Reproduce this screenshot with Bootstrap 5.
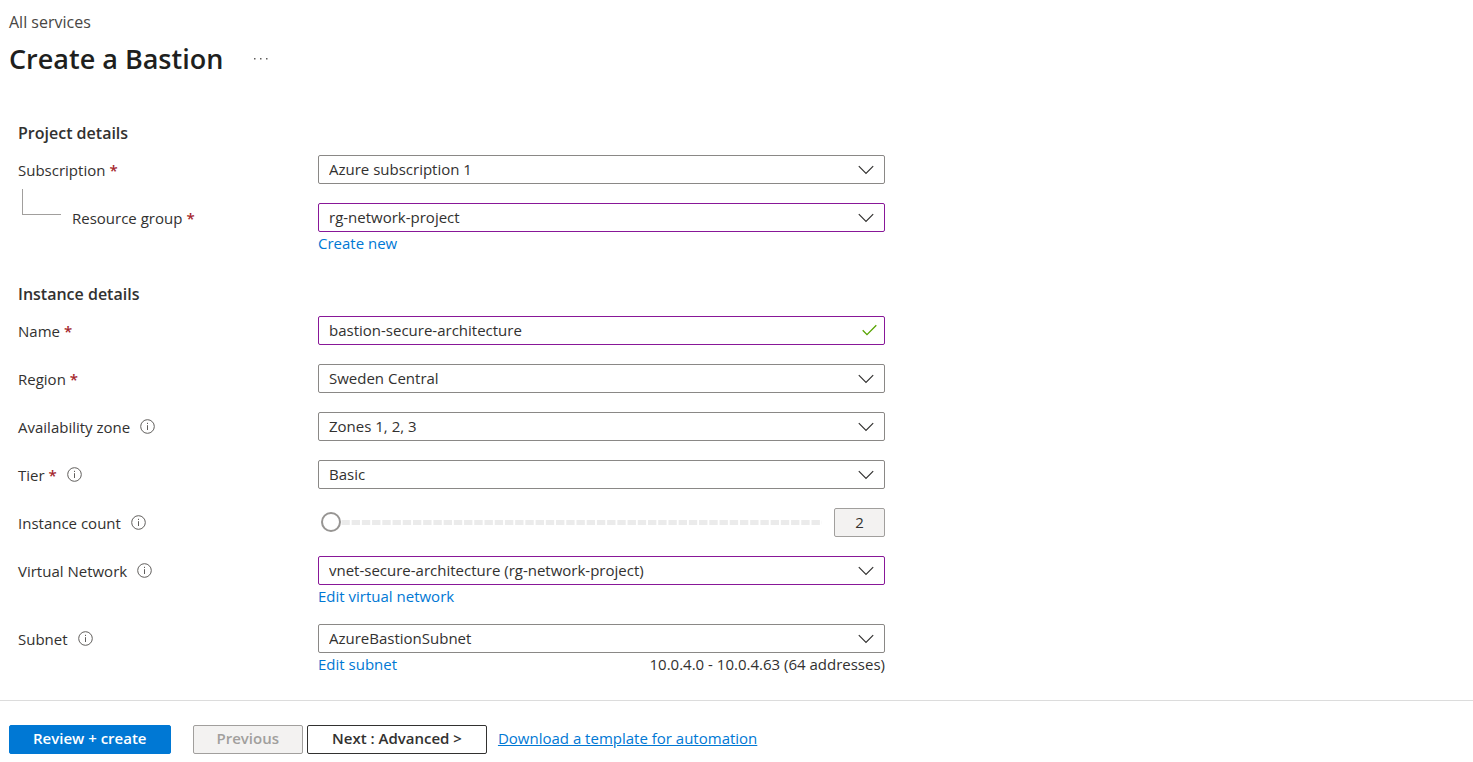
<!DOCTYPE html>
<html lang="en">
<head>
  <meta charset="UTF-8" />
  <title>Create a Bastion</title>
  <meta name="viewport" content="width=device-width, initial-scale=1" />
  <link href="https://cdn.jsdelivr.net/npm/bootstrap@5.3.0/dist/css/bootstrap.min.css" rel="stylesheet" />
  <style>
    body {
      font-family: "Open Sans", "Noto Sans", sans-serif;
      font-size: 15px;
      line-height: 20px;
      color: #323130;
    }
    a { color: #0078d4; }
    .crumb { color: #484644; font-size: 16px; }
    .page-title {
      font-size: 27px;
      line-height: 38px;
      font-weight: 600;
      color: #201f1e;
    }
    .page-head { padding: 12px 9px 0; }
    .more-btn { width: 20px; height: 20px; margin-left: 28px; }
    .blade-form { padding: 45px 18px 20px; }
    .section-title {
      font-size: 16px;
      line-height: 20px;
      font-weight: 600;
      margin: 0 0 12px;
    }
    .form-block + .form-block { margin-top: 32px; }
    .field-list { display: flex; flex-direction: column; gap: 19px; }
    .field-label {
      flex: 0 0 300px;
      height: 29px;
      display: flex;
      align-items: center;
    }
    .field-body { flex: 0 1 567px; min-width: 0; }
    .req { color: #a4262c; margin-left: 4px; font-weight: 600; }
    .info-icon { margin-left: 10px; }
    .tree-line {
      align-self: flex-start;
      width: 39px;
      height: 26px;
      margin: -14px 11px 0 4px;
      border-left: 1px solid #a19f9d;
      border-bottom: 1px solid #a19f9d;
    }
    .blade-form .form-select,
    .blade-form .form-control {
      height: 29px;
      min-height: 29px;
      padding: 0 40px 2px 10px;
      font-size: 15px;
      line-height: 20px;
      color: #323130;
      border: 1px solid #8a8886;
      border-radius: 2px;
    }
    .blade-form .form-select {
      background-image: url("data:image/svg+xml,%3csvg xmlns='http://www.w3.org/2000/svg' viewBox='0 0 16 10'%3e%3cpath fill='none' stroke='%23323130' stroke-width='1.2' d='M.8 1.2 8 8.4l7.2-7.2'/%3e%3c/svg%3e");
      background-size: 16px 10px;
      background-position: right 10px center;
    }
    .blade-form .edited { border-color: #881798; }
    .ok-mark { top: 8px; right: 8px; }
    .field-links { margin-top: 2px; line-height: 18px; }
    .count-box { width: 51px; flex: none; }
    .blade-form .count-box {
      padding: 0 0 2px;
      background: #f3f2f1;
      border-color: #a19f9d;
    }
    .count-range {
      appearance: none;
      flex: 1 1 auto;
      min-width: 0;
      height: 20px;
      margin: 0 12px 0 3px;
      background: none;
    }
    .count-range::-webkit-slider-runnable-track {
      height: 5px;
      border-radius: 3px;
      background: linear-gradient(90deg, #ebebeb 86%, transparent 86%) 0 0 / calc(100% / 49) 100%;
    }
    .count-range::-webkit-slider-thumb {
      appearance: none;
      width: 20px;
      height: 20px;
      margin-top: -8px;
      border: 2px solid #979593;
      border-radius: 50%;
      background: #fff;
    }
    .blade-foot {
      border-top: 1px solid #dcdcdc;
      padding: 24px 9px 8px;
    }
    .blade-foot .btn {
      height: 29px;
      padding: 0 23px 4px;
      font-size: 15px;
      line-height: 20px;
      font-weight: 600;
      border-radius: 2px;
    }
    .btn-create { background: #0078d4; border-color: #0078d4; color: #fff; margin-right: 22px; }
    .blade-foot .btn-prev { background: #f3f2f1; border-color: #a19f9d; color: #a19f9d; opacity: 1; margin-right: 4px; }
    .blade-foot .btn-next { background: #fff; border-color: #323130; color: #323130; margin-right: 11px; padding: 0 24px 4px; }
  </style>
</head>
<body class="d-flex flex-column min-vh-100">

<svg class="d-none">
  <symbol id="info" viewBox="0 0 15 15">
    <circle cx="7.5" cy="7.5" r="6.8" fill="none" stroke="#605e5c" stroke-width="1" />
    <path d="M7.5 6.2v4.8M7.5 3.8v1.2" fill="none" stroke="#605e5c" stroke-width="1" />
  </symbol>
</svg>

<header class="page-head">
  <a href="#" class="crumb text-decoration-none">All services</a>
  <div class="d-flex align-items-center mt-2">
    <h1 class="page-title mb-0">Create a Bastion</h1>
    <button type="button" class="more-btn btn p-0 border-0 d-flex align-items-center justify-content-center" aria-label="More actions">
      <svg width="14" height="2" viewBox="0 0 14 2" fill="#605e5c"><path d="M0 0h1.5v1.5H0zM6 0h1.5v1.5H6zM12 0h1.5v1.5H12z" /></svg>
    </button>
  </div>
</header>

<main class="flex-grow-1">
  <form class="blade-form" id="bastionForm">

    <!-- Project details -->
    <section class="form-block">
      <h2 class="section-title">Project details</h2>
      <div class="field-list">
        <div class="d-flex">
          <label class="field-label" for="subscription">Subscription <span class="req">*</span></label>
          <div class="field-body">
            <select class="form-select" id="subscription"><option>Azure subscription 1</option></select>
          </div>
        </div>
        <div class="d-flex">
          <label class="field-label" for="resourceGroup"><span class="tree-line"></span>Resource group <span class="req">*</span></label>
          <div class="field-body">
            <select class="form-select edited" id="resourceGroup"><option>rg-network-project</option></select>
            <div class="field-links"><a href="#" class="text-decoration-none">Create new</a></div>
          </div>
        </div>
      </div>
    </section>

    <!-- Instance details -->
    <section class="form-block">
      <h2 class="section-title">Instance details</h2>
      <div class="field-list">
        <div class="d-flex">
          <label class="field-label" for="bastionName">Name <span class="req">*</span></label>
          <div class="field-body position-relative">
            <input type="text" class="form-control edited" id="bastionName" value="bastion-secure-architecture" />
            <svg class="ok-mark position-absolute" width="15" height="12" viewBox="0 0 15 12"><path d="M.7 6.3 5 10.6 14.3 1.3" fill="none" stroke="#57a300" stroke-width="1.3" /></svg>
          </div>
        </div>
        <div class="d-flex">
          <label class="field-label" for="region">Region <span class="req">*</span></label>
          <div class="field-body">
            <select class="form-select" id="region"><option>Sweden Central</option></select>
          </div>
        </div>
        <div class="d-flex">
          <label class="field-label" for="zone">Availability zone <svg class="info-icon" width="15" height="15"><use href="#info" /></svg></label>
          <div class="field-body">
            <select class="form-select" id="zone"><option>Zones 1, 2, 3</option></select>
          </div>
        </div>
        <div class="d-flex">
          <label class="field-label" for="tier">Tier <span class="req">*</span> <svg class="info-icon" width="15" height="15"><use href="#info" /></svg></label>
          <div class="field-body">
            <select class="form-select" id="tier"><option>Basic</option></select>
          </div>
        </div>
        <div class="d-flex">
          <label class="field-label" for="countRange">Instance count <svg class="info-icon" width="15" height="15"><use href="#info" /></svg></label>
          <div class="field-body d-flex align-items-center">
            <input type="range" class="count-range" id="countRange" min="2" max="50" value="2" />
            <input type="text" class="form-control count-box text-center" id="countBox" value="2" aria-label="Instance count value" readonly />
          </div>
        </div>
        <div class="d-flex">
          <label class="field-label" for="vnet">Virtual Network <svg class="info-icon" width="15" height="15"><use href="#info" /></svg></label>
          <div class="field-body">
            <select class="form-select edited" id="vnet"><option>vnet-secure-architecture (rg-network-project)</option></select>
            <div class="field-links"><a href="#" class="text-decoration-none">Edit virtual network</a></div>
          </div>
        </div>
        <div class="d-flex">
          <label class="field-label" for="subnet">Subnet <svg class="info-icon" width="15" height="15"><use href="#info" /></svg></label>
          <div class="field-body">
            <select class="form-select" id="subnet"><option>AzureBastionSubnet</option></select>
            <div class="field-links d-flex justify-content-between">
              <a href="#" class="text-decoration-none">Edit subnet</a>
              <span>10.0.4.0 - 10.0.4.63 (64 addresses)</span>
            </div>
          </div>
        </div>
      </div>
    </section>
  </form>
</main>

<footer class="blade-foot d-flex align-items-center">
  <button type="submit" form="bastionForm" class="btn btn-create">Review + create</button>
  <button type="button" class="btn btn-prev" disabled>Previous</button>
  <button type="button" class="btn btn-next">Next : Advanced &gt;</button>
  <a href="#" class="pb-1">Download a template for automation</a>
</footer>

<script src="https://cdn.jsdelivr.net/npm/bootstrap@5.3.0/dist/js/bootstrap.bundle.min.js"></script>
<script>
  const range = document.getElementById("countRange");
  const box = document.getElementById("countBox");
  range.addEventListener("input", () => {
    box.value = range.value;
  });
</script>

</body>
</html>
